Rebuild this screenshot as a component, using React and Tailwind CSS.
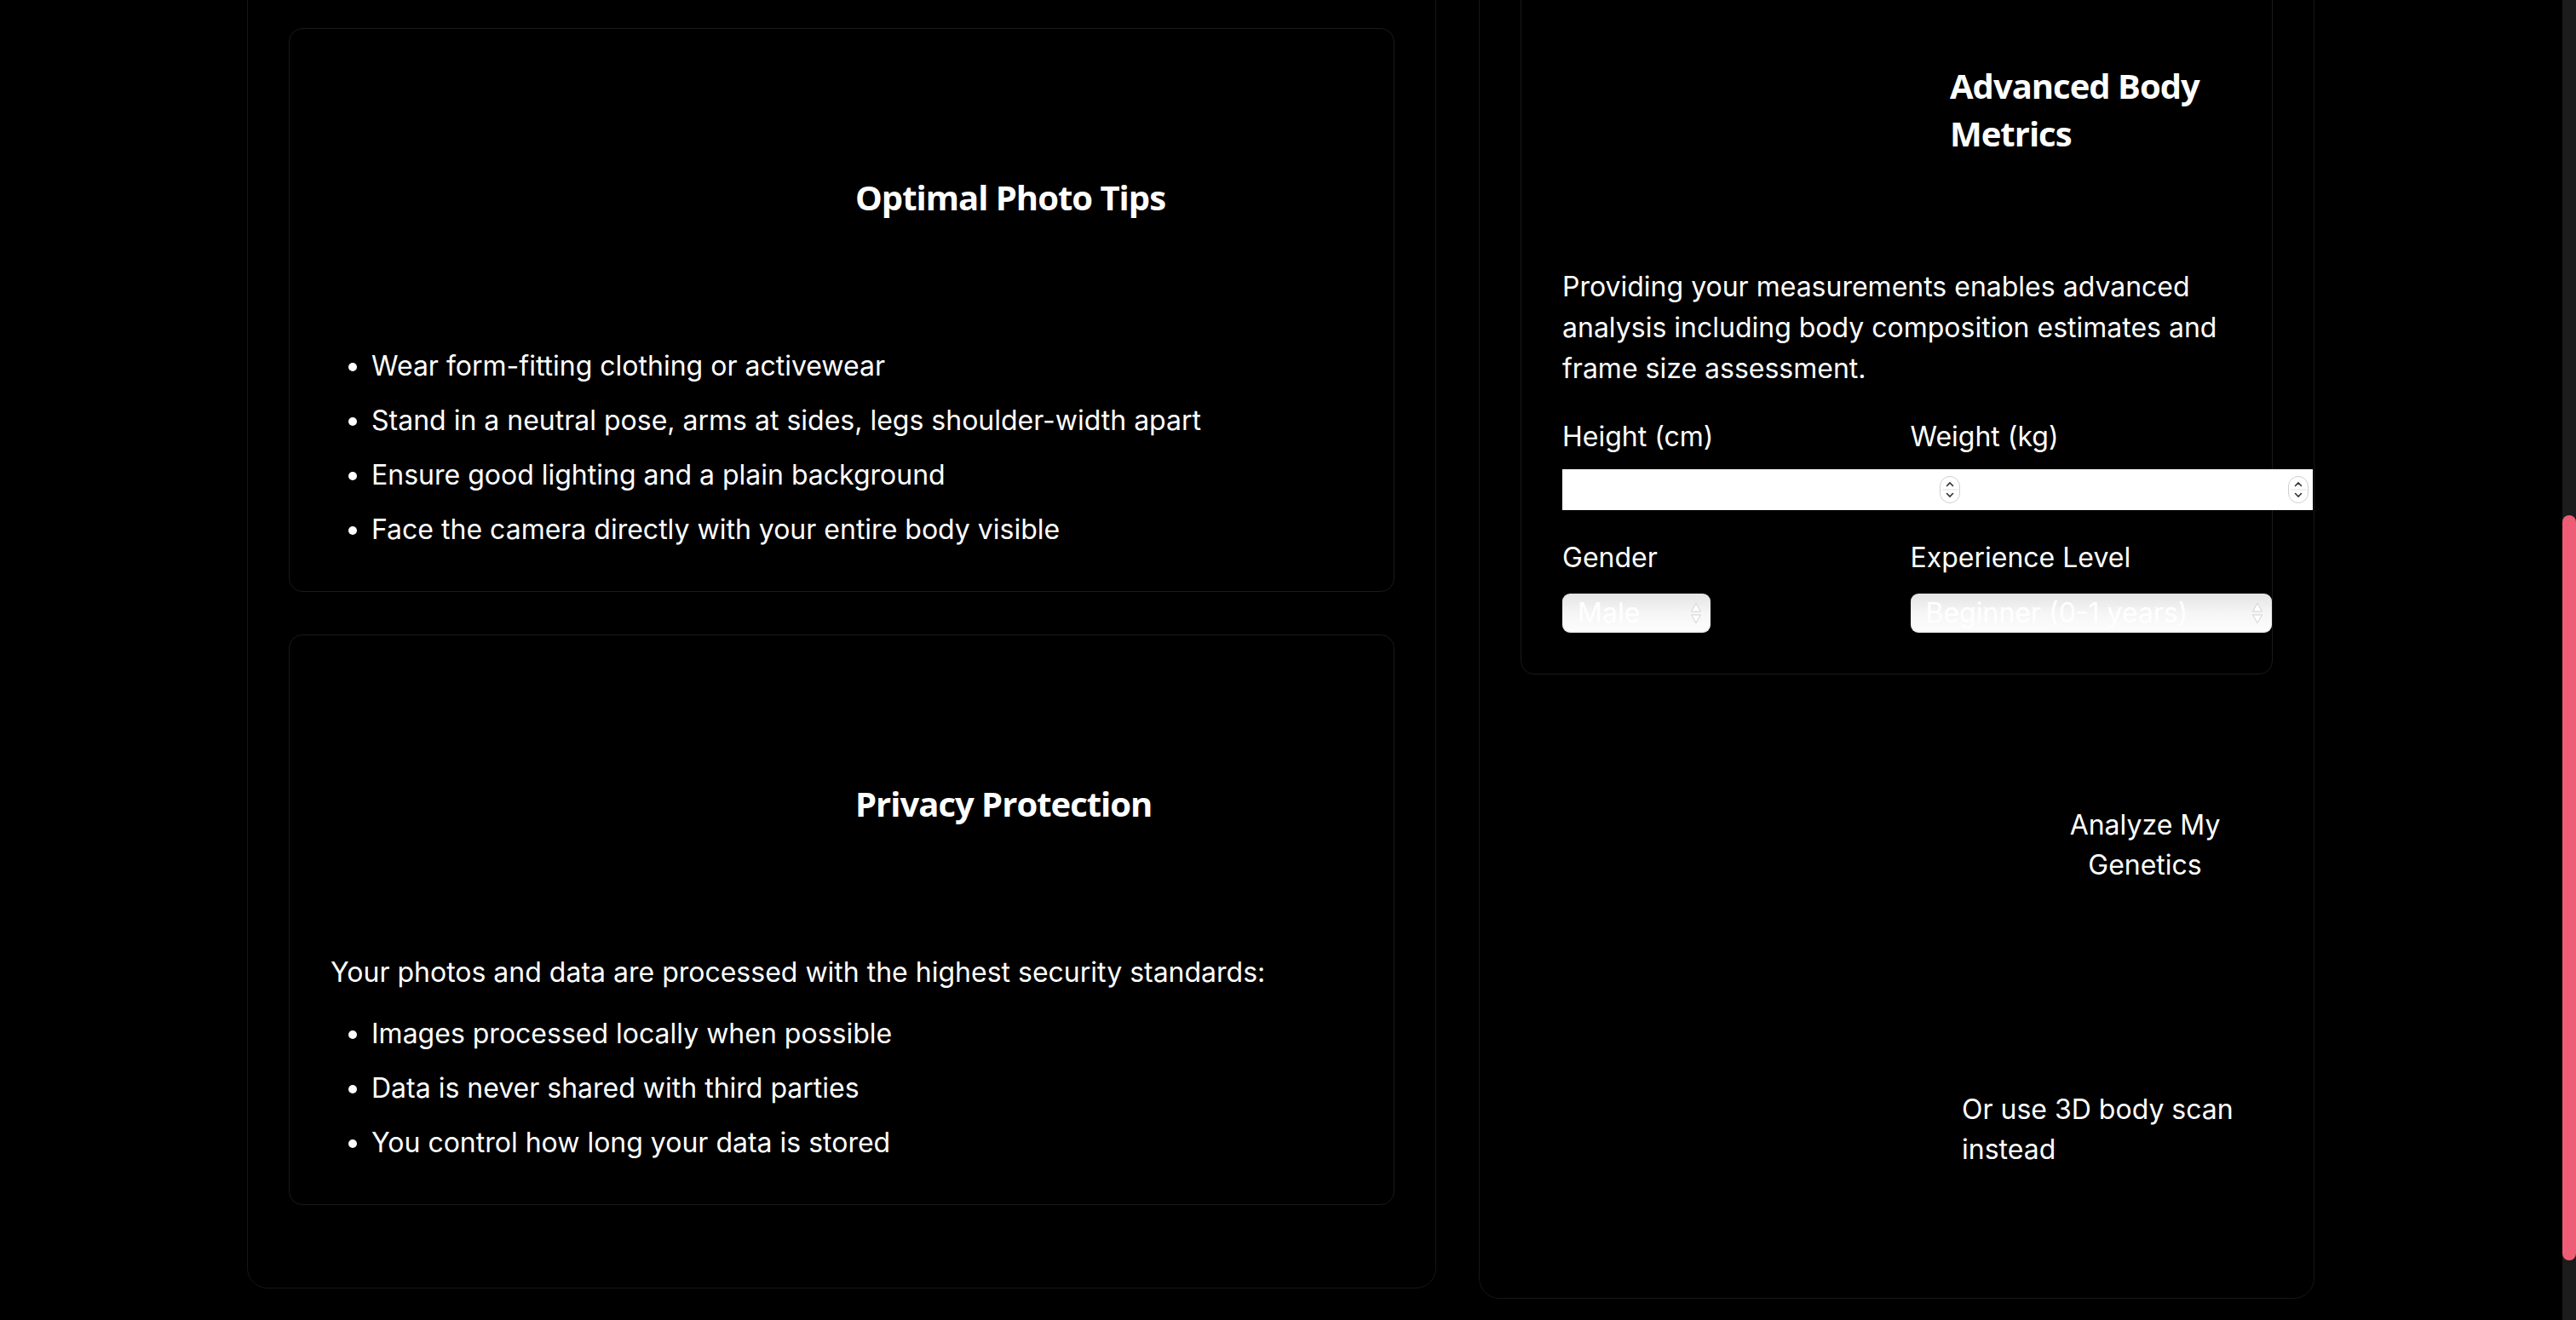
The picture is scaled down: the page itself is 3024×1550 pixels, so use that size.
import React from 'react';

const tips = [
  'Wear form-fitting clothing or activewear',
  'Stand in a neutral pose, arms at sides, legs shoulder-width apart',
  'Ensure good lighting and a plain background',
  'Face the camera directly with your entire body visible',
];

const privacy = [
  'Images processed locally when possible',
  'Data is never shared with third parties',
  'You control how long your data is stored',
];

// the icons in this layout render black on black, only their box is visible as space
const IconSpace = ({ className }) => <div aria-hidden="true" className={`h-[300px] shrink-0 ${className}`} />;

const Spinner = () => (
  <svg width="24" height="32" viewBox="0 0 24 32" className="absolute right-[5px] top-1/2 -translate-y-1/2">
    <rect x="0.5" y="0.5" width="23" height="31" rx="11.5" fill="#fff" stroke="#cfcfcf" />
    <line x1="3" y1="16" x2="21" y2="16" stroke="#e2e2e2" />
    <path d="M8.5 11.5 L12 8 L15.5 11.5" stroke="#333" strokeWidth="1.6" fill="none" strokeLinecap="round" />
    <path d="M8.5 20.5 L12 24 L15.5 20.5" stroke="#333" strokeWidth="1.6" fill="none" strokeLinecap="round" />
  </svg>
);

const SelectArrows = () => (
  <svg width="14" height="26" viewBox="0 0 14 26" className="pointer-events-none absolute right-[10px] top-1/2 -translate-y-1/2">
    <path d="M1.5 11 L7 1.5 L12.5 11 Z" fill="#fff" stroke="#d2d2d2" />
    <path d="M1.5 15 L7 24.5 L12.5 15 Z" fill="#fff" stroke="#d2d2d2" />
  </svg>
);

const NumberField = ({ label, top }) => (
  <div className={`relative min-w-0 ${top ? 'z-10' : ''}`}>
    <label className="mb-[14px] block text-[32px] leading-[48px]">{label}</label>
    <div className="relative h-[48px] w-[472px] bg-white">
      <input type="number" className="h-full w-full bg-transparent px-[6px] text-[32px] text-black outline-none [appearance:textfield] [&::-webkit-inner-spin-button]:appearance-none" />
      <Spinner />
    </div>
  </div>
);

const SelectField = ({ label, value, width }) => (
  <div className="min-w-0">
    <label className="mb-[18px] block text-[32px] leading-[48px]">{label}</label>
    <div className={`relative h-[46px] ${width}`}>
      <select
        defaultValue={value}
        className="h-full w-full appearance-none rounded-[9px] bg-linear-to-b from-[#e4e4e4] via-[#f6f6f6] to-[#fdfdfd] pl-[18px] text-[32px] leading-[46px] text-white shadow-[inset_0_-1px_2px_rgba(0,0,0,0.12),0_1px_1px_rgba(0,0,0,0.2)] outline-none"
      >
        <option>{value}</option>
      </select>
      <SelectArrows />
    </div>
  </div>
);

const Card = ({ title, children }) => (
  <div className="rounded-[16px] border border-[#1a1a1a] p-[48px]">
    <div className="mb-[24px] flex items-center gap-[16px]">
      <IconSpace className="w-[600px]" />
      <h3 className="font-['Open_Sans',sans-serif] text-[40px] font-bold leading-[56px] tracking-[-1px]">{title}</h3>
    </div>
    {children}
  </div>
);

const BulletList = ({ items }) => (
  <ul className="flex list-disc flex-col gap-[16px] pl-[48px]">
    {items.map((item) => (
      <li key={item} className="text-[32px] leading-[48px]">{item}</li>
    ))}
  </ul>
);

export default function App() {
  return (
    <div className="flex h-[1550px] w-full overflow-hidden bg-black font-['Inter',sans-serif] text-white">
      <main className="flex-1 overflow-hidden">
        <div className="mx-auto -mt-[109px] flex w-[2428px] items-start gap-[50px]">
          {/* Left column: tips + privacy */}
          <section className="flex w-[1396px] flex-col gap-[50px] rounded-[24px] border border-[#161616] px-[48px] pb-[97px] pt-[141px]">
            <Card title="Optimal Photo Tips">
              <BulletList items={tips} />
            </Card>
            <Card title="Privacy Protection">
              <p className="mb-[24px] text-[32px] leading-[48px]">
                Your photos and data are processed with the highest security standards:
              </p>
              <BulletList items={privacy} />
            </Card>
          </section>

          {/* Right column: metrics form + actions */}
          <section className="w-[981px] rounded-[24px] border border-[#161616] px-[48px] pb-[48px] pt-[48px]">
            <div className="rounded-[16px] border border-[#1a1a1a] p-[48px]">
              <div className="mb-[24px] flex items-center gap-[16px]">
                <IconSpace className="w-[439px]" />
                <h3 className="min-w-0 flex-1 pb-[20px] font-['Open_Sans',sans-serif] text-[40px] font-bold leading-[56px] tracking-[-1px]">
                  Advanced Body Metrics
                </h3>
              </div>
              <p className="mb-[32px] text-[32px] leading-[48px]">
                Providing your measurements enables advanced analysis including body composition estimates and frame size assessment.
              </p>
              <div className="grid grid-cols-2 gap-x-[32px] gap-y-[32px]">
                <NumberField label="Height (cm)" top />
                <NumberField label="Weight (kg)" />
                <SelectField label="Gender" value="Male" width="w-[174px]" />
                <SelectField label="Experience Level" value="Beginner (0-1 years)" width="w-[424px]" />
              </div>
            </div>

            <button className="mt-[48px] flex w-full items-center gap-[16px] py-[2px] text-left">
              <IconSpace className="w-[617px]" />
              <span className="w-[200px] text-center text-[32px] leading-[47px]">Analyze My Genetics</span>
            </button>

            <a className="mt-[32px] flex items-center gap-[16px]">
              <IconSpace className="w-[502px]" />
              <span className="min-w-0 flex-1 text-[32px] leading-[47px]">Or use 3D body scan instead</span>
            </a>
          </section>
        </div>
      </main>

      {/* scrollbar */}
      <div className="relative w-[16px] shrink-0 bg-[#1c1c1c]">
        <div className="absolute left-0 right-0 top-[605px] h-[875px] rounded-full bg-[#ee5d75]" />
      </div>
    </div>
  );
}
